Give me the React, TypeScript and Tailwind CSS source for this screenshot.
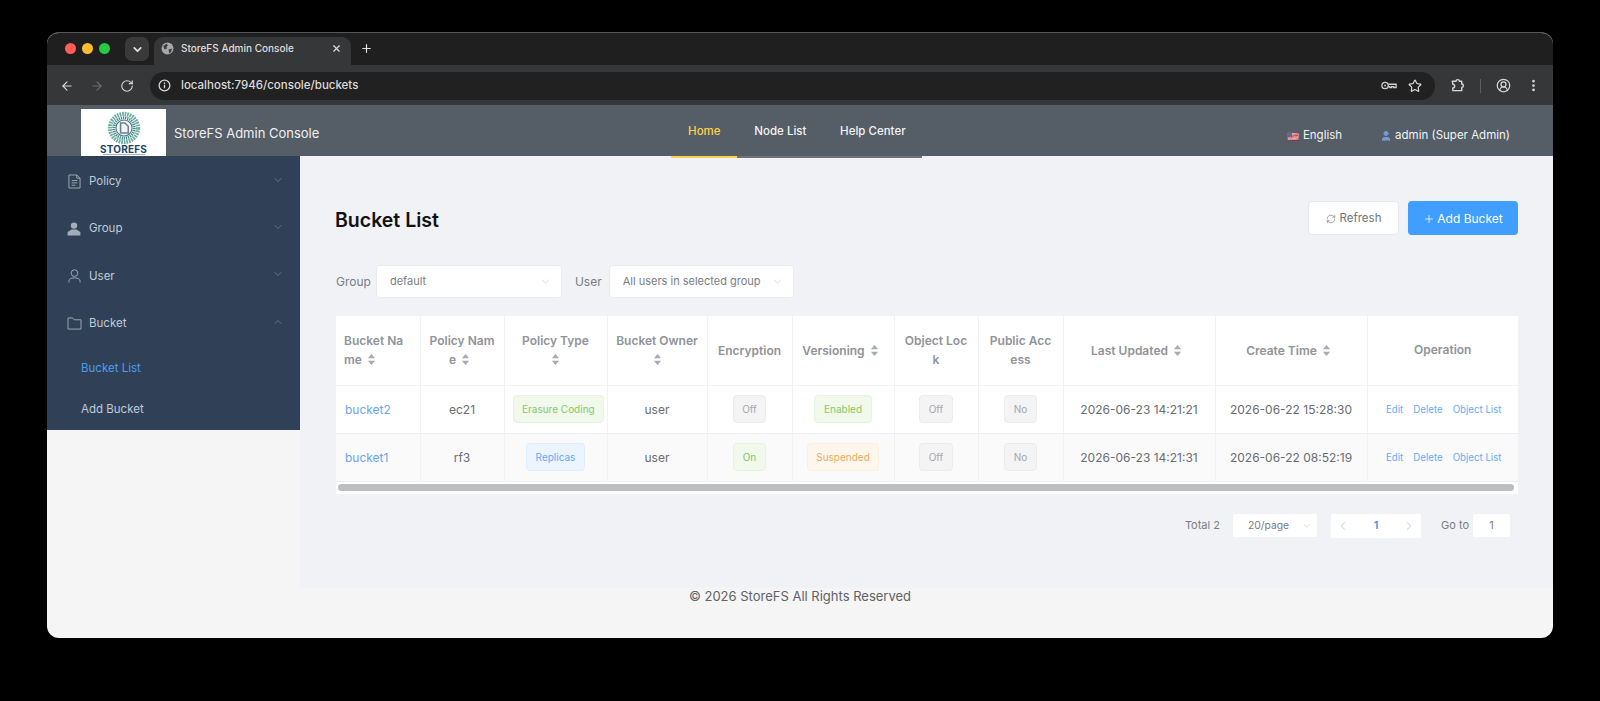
import type { ReactNode } from "react";
import { ChevronDown, ChevronUp, ChevronLeft, ChevronRight, ArrowLeft, ArrowRight, RotateCw, RefreshCw, Star, CircleUserRound, EllipsisVertical, X, Plus, User } from "lucide-react";

const widths = [84, 84, 103, 100, 85, 102, 84, 85, 152, 152, 151];

function Sort({ block }: { block?: boolean }) {
  return (
    <svg viewBox="0 0 10 14" className={block ? "block mx-auto mt-[3px] mb-[3px] w-[9px] h-[13px]" : "inline-block w-[9px] h-[13px] ml-[5px] mr-[5px] align-[-2px]"}>
      <path d="M5 1 L9 5.5 H1 Z M5 13 L1 8.5 H9 Z" fill="#a8abb2" />
    </svg>
  );
}

function Tag({ tone, children }: { tone: "green" | "gray" | "blue" | "orange"; children: ReactNode }) {
  const c = {
    green: "bg-[#f0f9eb] border-[#e6f4dc] text-[#85c868]",
    gray: "bg-[#f4f4f5] border-[#ececee] text-[#a3a6ad]",
    blue: "bg-[#ecf5ff] border-[#dfeefd] text-[#66a9f5]",
    orange: "bg-[#fdf6ec] border-[#fbf0df] text-[#e8ae5c]",
  }[tone];
  return <span className={`inline-flex items-center justify-center h-[28px] px-[8.5px] pt-[1px] rounded-[4px] border text-[10px] whitespace-nowrap align-middle ${c}`}>{children}</span>;
}

function Th({ children, sort, left, block }: { children: string; sort?: boolean; left?: boolean; block?: boolean }) {
  return (
    <th className={`border-r border-[#f0f1f3] px-[8px] font-semibold text-[12px] leading-[19px] text-[#909399] break-all ${left ? "text-left" : "text-center"}`}>
      {children}
      {sort && <Sort block={block} />}
    </th>
  );
}

type RowProps = {
  name: string; policy: string; type: string; typeTone: "green" | "blue";
  enc: string; encTone: "gray" | "green"; ver: string; verTone: "green" | "orange";
  upd: string; cre: string; alt?: boolean;
};

function Row({ name, policy, type, typeTone, enc, encTone, ver, verTone, upd, cre, alt }: RowProps) {
  const tag = "border-r border-[#f0f1f3] px-[8px] text-center whitespace-nowrap";
  const txt = "border-r border-[#f0f1f3] px-[8px] pt-[2px] text-center text-[12px] text-[#696c72] whitespace-nowrap";
  return (
    <tr className={`h-[48px] ${alt ? "bg-[#fafafa]" : "bg-white"} border-b border-[#ebeef5]`}>
      <td className="border-r border-[#f0f1f3] px-[9px] pt-[2px] text-left text-[12px] text-[#6aa5ec] whitespace-nowrap">{name}</td>
      <td className={txt}>{policy}</td>
      <td className={tag}><Tag tone={typeTone}>{type}</Tag></td>
      <td className={txt}>user</td>
      <td className={tag}><Tag tone={encTone}>{enc}</Tag></td>
      <td className={tag}><Tag tone={verTone}>{ver}</Tag></td>
      <td className={tag}><Tag tone="gray">Off</Tag></td>
      <td className={tag}><Tag tone="gray">No</Tag></td>
      <td className={txt}>{upd}</td>
      <td className={txt}>{cre}</td>
      <td className="pl-[2px] pt-[2px] text-center text-[9.7px] text-[#66adf8] whitespace-nowrap">
        <span>Edit</span><span className="ml-[10px]">Delete</span><span className="ml-[10px]">Object List</span>
      </td>
    </tr>
  );
}

function Select({ label, width }: { label: string; width: string }) {
  return (
    <div className={`${width} h-[33px] bg-white border border-[#e9ebef] rounded-[4px] flex items-center justify-between pl-[13px] pr-[9px] text-[11px] text-[#7a7d84] whitespace-nowrap`}>
      <span>{label}</span>
      <ChevronDown size={13} strokeWidth={1} className="text-[#b4b7bd]" />
    </div>
  );
}

function SideItem({ icon, label, open }: { icon: ReactNode; label: string; open?: boolean }) {
  return (
    <div className="h-[47.4px] flex items-center pl-[18px] pr-[16px] text-[11.5px] text-[#bfcbd9]">
      <span className="w-[18px] flex justify-center text-[#a3adb9]">{icon}</span>
      <span className="ml-[6px] flex-1">{label}</span>
      {open ? <ChevronUp size={12} strokeWidth={1} className="text-[#9aa6b5] -mt-[4px]" /> : <ChevronDown size={12} strokeWidth={1} className="text-[#9aa6b5] -mt-[4px]" />}
    </div>
  );
}

const PolicyIcon = (
  <svg viewBox="0 0 14 16" className="w-[13px] h-[15px]" fill="none" stroke="currentColor" strokeWidth="1">
    <path d="M1 1 H9.5 L13 4.5 V15 H1 Z M9.5 1 V4.5 H13" />
    <path d="M4 7 H10 M4 9.5 H10 M4 12 H8" />
  </svg>
);
const GroupIcon = (
  <svg viewBox="0 0 14 14" className="w-[14px] h-[14px]" fill="currentColor">
    <circle cx="7" cy="3.6" r="3.2" />
    <path d="M4.6 7.4 H9.4 L13.4 10 V13.6 H0.6 V10 Z" />
  </svg>
);
const UserIcon = (
  <svg viewBox="0 0 14 15" className="w-[13px] h-[14px]" fill="none" stroke="currentColor" strokeWidth="1">
    <circle cx="7" cy="4.4" r="3.6" />
    <path d="M1 14.5 V13 C1 10.6 3 9.6 7 9.6 C11 9.6 13 10.6 13 13 V14.5" />
  </svg>
);
const FolderIcon = (
  <svg viewBox="0 0 16 14" className="w-[15px] h-[13px]" fill="none" stroke="currentColor" strokeWidth="1">
    <path d="M1 1 H6 L7.6 3 H15 V13 H1 Z" />
  </svg>
);

export default function App() {
  return (
    <div className="w-[1600px] h-[701px] bg-black pt-[32px] pl-[47px] overflow-hidden" style={{ fontFamily: "Inter, 'Liberation Sans', sans-serif" }}>
      <div className="w-[1506px] h-[606px] rounded-[12px] overflow-hidden bg-[#f5f5f5] flex flex-col border-t border-[#55575a]">
        {/* tab strip */}
        <div className="h-[32px] shrink-0 bg-[#1f1f1f] flex items-end pl-[18px] text-[#dcdcdc]">
          <div className="flex items-center gap-[6px] h-full pb-[1px]">
            <span className="w-[11px] h-[11px] rounded-full bg-[#ff5f57]" />
            <span className="w-[11px] h-[11px] rounded-full bg-[#febc2e]" />
            <span className="w-[11px] h-[11px] rounded-full bg-[#28c840]" />
          </div>
          <div className="ml-[15px] mb-[4px] w-[24px] h-[24px] rounded-[7px] bg-[#3a3a3a] flex items-center justify-center">
            <ChevronDown size={13} strokeWidth={3} className="text-[#e4e4e4]" />
          </div>
          <div className="ml-[5px] w-[197px] h-[28px] rounded-t-[9px] bg-[#363738] flex items-center pl-[7px] pr-[9px] pb-[5px]">
            <svg viewBox="0 0 24 24" className="w-[13px] h-[13px] shrink-0">
              <circle cx="12" cy="12" r="11" fill="#a9a9a9" />
              <path d="M4 8 L10 3 L13 6 L10 9 L11 12 L7 14 Z M14 14 L20 12 L19 18 L15 21 Z" fill="#3c3d3e" />
            </svg>
            <span className="ml-[7px] flex-1 text-[10px] font-medium text-[#dedede] whitespace-nowrap">StoreFS Admin Console</span>
            <X size={11} strokeWidth={2.5} className="text-[#dedede]" />
          </div>
          <div className="ml-[9px] mb-[10px]">
            <Plus size={13} strokeWidth={2.2} className="text-[#e0e0e0]" />
          </div>
        </div>
        {/* toolbar */}
        <div className="h-[40px] shrink-0 bg-[#363738] flex items-center pl-[13px] pt-[1px]">
          <ArrowLeft size={14} strokeWidth={2} className="text-[#d6d6d6]" />
          <ArrowRight size={14} strokeWidth={2} className="ml-[16px] text-[#6b6c6d]" />
          <RotateCw size={14} strokeWidth={2} className="ml-[16px] text-[#d6d6d6]" />
          <div className="ml-[16px] w-[1285px] h-[28px] rounded-full bg-[#212121] flex items-center pl-[8px] pr-[13px]">
            <svg viewBox="0 0 16 16" className="w-[13px] h-[13px] shrink-0" fill="none" stroke="#d6d6d6" strokeWidth="1.6">
              <circle cx="8" cy="8" r="6.6" />
              <path d="M8 7.2 V11.5 M8 4.4 V6" />
            </svg>
            <span className="ml-[10px] flex-1 text-[11.5px] font-medium text-[#dcdcdc]">localhost:7946/console/buckets</span>
            <svg viewBox="0 0 18 12" className="w-[16px] h-[11px]" fill="none" stroke="#cfcfcf" strokeWidth="1.5">
              <circle cx="4.6" cy="6" r="3.6" />
              <circle cx="4.6" cy="6" r="1" fill="#cfcfcf" stroke="none" />
              <path d="M8.2 4.6 H17 V8.4 H14.4 V7.2 H12 V8.4 H10 V7.2 H8.2" />
            </svg>
            <Star size={14} strokeWidth={2} className="ml-[11px] text-[#dcdcdc]" />
          </div>
          <svg viewBox="0 0 16 16" className="ml-[15px] w-[15px] h-[15px]" fill="none" stroke="#d6d6d6" strokeWidth="1.5" strokeLinejoin="round">
            <path d="M2.5 3.5 H6.4 A1.8 1.8 0 0 1 10 3.5 H12.5 V6.4 A1.8 1.8 0 0 1 12.5 10 V13.5 H3 V10.6 A2 2 0 0 0 3 6.6 Z" />
          </svg>
          <span className="ml-[15px] w-px h-[14px] bg-[#5d5e60]" />
          <CircleUserRound size={15} strokeWidth={2} className="ml-[15px] text-[#d6d6d6]" />
          <EllipsisVertical size={15} strokeWidth={2.4} className="ml-[15px] text-[#d6d6d6]" />
        </div>
        {/* app header */}
        <div className="h-[51px] shrink-0 bg-[#555d67] flex text-white pr-[43px]">
          <div className="ml-[34px] mt-[4px] w-[85px] h-[47px] bg-white flex flex-col items-center overflow-hidden pt-[2px]">
            <svg viewBox="0 0 40 40" className="w-[34px] h-[34px] shrink-0">
              <circle cx="20" cy="20" r="16.5" fill="none" stroke="#6fae9f" strokeWidth="5" strokeDasharray="2 1" />
              <circle cx="20" cy="20" r="12" fill="none" stroke="#3f8d8c" strokeWidth="3.5" strokeDasharray="1.5 1" />
              <circle cx="20" cy="20" r="9.5" fill="#eef5f3" stroke="#4a6f80" strokeWidth="1.2" />
              <path d="M16 14 h5 l4 4 v8 h-9 z" fill="none" stroke="#6f808a" strokeWidth="1.8" />
            </svg>
            <span className="text-[10px] leading-[9px] font-bold text-[#1d4468] tracking-[0.2px]">STOREFS</span>
            <span className="w-[42px] h-px bg-[#9fb0b8] shrink-0" />
          </div>
          <div className="ml-[8px] self-center text-[13px] text-[#eef0f2] whitespace-nowrap mt-[7px]">StoreFS Admin Console</div>
          <div className="ml-[352px] relative z-10 flex h-[53px] border-b-2 border-[#6f7377] text-[11.5px] font-medium">
            <div className="w-[66px] h-[53px] border-b-2 border-[#ffd04b] text-[#ffd04b] flex items-center justify-center pt-[3px]">Home</div>
            <div className="w-[86px] flex items-center justify-center text-[#f2f3f4] pt-[3px]">Node List</div>
            <div className="w-[99px] flex items-center justify-center text-[#f2f3f4] pt-[3px]">Help Center</div>
          </div>
          <div className="ml-auto self-center mt-[11px] flex items-center text-[11.5px] text-[#f2f3f4] whitespace-nowrap">
            <span className="text-[10px] mr-[4px]">🇺🇸</span>
            <span>English</span>
            <User size={12} fill="#6ea0d6" stroke="#6ea0d6" className="ml-[38px] mr-[3px]" />
            <span>admin (Super Admin)</span>
          </div>
        </div>
        {/* body */}
        <div className="h-[432px] shrink-0 flex">
          <aside className="w-[253px] shrink-0 h-[274px] bg-[#304056] pt-[2px]">
            <SideItem icon={PolicyIcon} label="Policy" />
            <SideItem icon={GroupIcon} label="Group" />
            <SideItem icon={UserIcon} label="User" />
            <SideItem icon={FolderIcon} label="Bucket" open />
            <div className="h-[41.5px] flex items-center pl-[34px] text-[11.5px] text-[#4b9ef0]">Bucket List</div>
            <div className="h-[41.5px] flex items-center pl-[34px] text-[11.5px] text-[#bfcbd9]">Add Bucket</div>
          </aside>
          <main className="flex-1 min-w-0 bg-[#f0f2f5] pl-[36px] pr-[35px] pt-[45px]">
            <div className="flex items-center justify-between h-[34px]">
              <h1 className="text-[19.5px] leading-[34px] font-semibold text-[#111] mt-[3px] -ml-[1px]">Bucket List</h1>
              <div className="flex gap-[9px]">
                <div className="w-[91px] h-[34px] pt-[2px] bg-white border border-[#e4e7ed] rounded-[4px] flex items-center justify-center text-[11.5px] text-[#72757b]">
                  <RefreshCw size={10} strokeWidth={1.5} className="mr-[4px]" />Refresh
                </div>
                <div className="w-[110px] h-[34px] pt-[1px] bg-[#409eff] rounded-[4px] flex items-center justify-center text-[12px] text-white">
                  <Plus size={12} strokeWidth={1.5} className="mr-[2px]" />Add Bucket
                </div>
              </div>
            </div>
            <div className="mt-[30px] flex items-center text-[12px] text-[#7a7d84]">
              <span>Group</span>
              <div className="ml-[5px]"><Select label="default" width="w-[186px]" /></div>
              <span className="ml-[13px]">User</span>
              <div className="ml-[7px]"><Select label="All users in selected group" width="w-[185px]" /></div>
            </div>
            <div className="mt-[18px] w-[1182px]">
              <table className="w-[1182px] table-fixed border-collapse">
                <colgroup>
                  {widths.map((w, i) => <col key={i} style={{ width: w }} />)}
                </colgroup>
                <thead>
                  <tr className="h-[69px] bg-white border-b border-[#f2f3f5]">
                    <Th sort left>Bucket Name</Th>
                    <Th sort>Policy Name</Th>
                    <Th sort block>Policy Type</Th>
                    <Th sort>Bucket Owner</Th>
                    <Th>Encryption</Th>
                    <Th sort>Versioning</Th>
                    <Th>Object Lock</Th>
                    <Th>Public Access</Th>
                    <Th sort>Last Updated</Th>
                    <Th sort>Create Time</Th>
                    <th className="font-semibold text-[12px] text-[#909399]">Operation</th>
                  </tr>
                </thead>
                <tbody>
                  <Row name="bucket2" policy="ec21" type="Erasure Coding" typeTone="green" enc="Off" encTone="gray" ver="Enabled" verTone="green" upd="2026-06-23 14:21:21" cre="2026-06-22 15:28:30" />
                  <Row alt name="bucket1" policy="rf3" type="Replicas" typeTone="blue" enc="On" encTone="green" ver="Suspended" verTone="orange" upd="2026-06-23 14:21:31" cre="2026-06-22 08:52:19" />
                </tbody>
              </table>
              <div className="h-[12px] bg-white flex items-center pl-[2px] pr-[4px]">
                <div className="w-full h-[7px] rounded-full bg-[#bdbec0]" />
              </div>
            </div>
            <div className="mt-[20px] flex items-center justify-end pr-[8px] text-[11px] text-[#7a7d84]">
              <span>Total 2</span>
              <div className="ml-[13px] w-[84px] h-[23px] bg-white rounded-[2px] flex items-center justify-between pl-[15px] pr-[5px]">
                <span className="text-[10.3px]">20/page</span>
                <ChevronDown size={10} strokeWidth={1} className="text-[#a8abb2]" />
              </div>
              <div className="ml-[14px] w-[90px] h-[24px] bg-white flex items-center justify-between px-[5px]">
                <ChevronLeft size={14} strokeWidth={1} className="text-[#a8abb2]" />
                <span className="font-semibold text-[#4a90e2]">1</span>
                <ChevronRight size={14} strokeWidth={1} className="text-[#a8abb2]" />
              </div>
              <span className="ml-[20px]">Go to</span>
              <div className="ml-[4px] w-[37px] h-[23px] bg-white rounded-[2px] flex items-center justify-center">1</div>
            </div>
          </main>
        </div>
        <footer className="flex-1 text-center text-[13px] leading-[17px] text-[#606266]">© 2026 StoreFS All Rights Reserved</footer>
      </div>
    </div>
  );
}
